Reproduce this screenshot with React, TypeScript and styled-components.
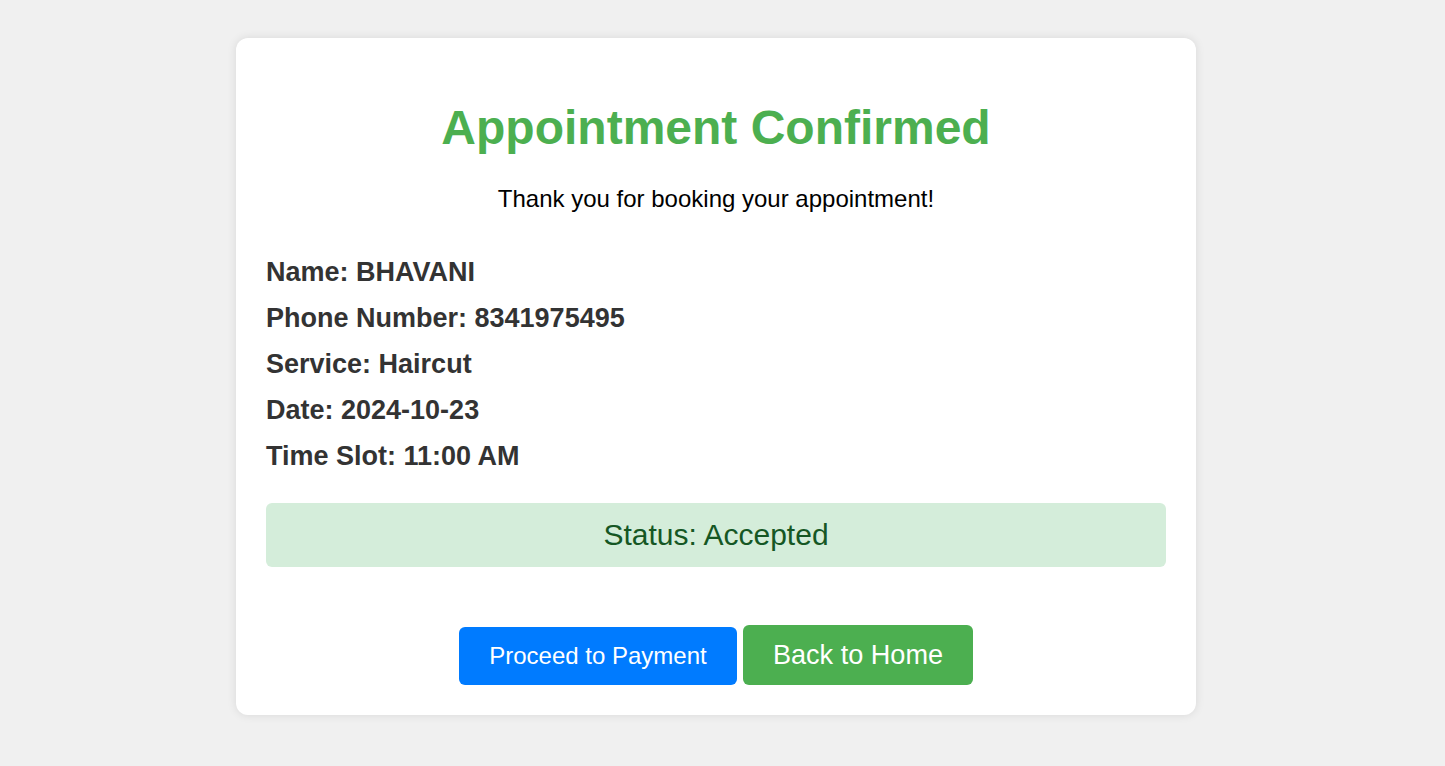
import React from "react";
import styled, { createGlobalStyle } from "styled-components";

const GlobalStyle = createGlobalStyle`
  html, body {
    margin: 0;
    padding: 0;
    background: #f0f0f0;
    font-family: "Liberation Sans", Arial, sans-serif;
  }
`;

const Page = styled.div`
  display: flex;
  justify-content: center;
  padding: 38px 13px 0 0;
  min-height: 766px;
  box-sizing: border-box;
`;

const Card = styled.div`
  width: 960px;
  box-sizing: border-box;
  background: #ffffff;
  border-radius: 12px;
  box-shadow: 0 0 10px rgba(0, 0, 0, 0.1);
  padding: 30px;
  display: flex;
  flex-direction: column;
  align-self: flex-start;
`;

const Title = styled.h1`
  margin: 32px 0 0;
  font-size: 48px;
  line-height: 55px;
  font-weight: bold;
  color: #4caf50;
  text-align: center;
`;

const Subtitle = styled.p`
  margin: 30px 0 0;
  font-size: 24px;
  line-height: 28px;
  color: #000000;
  text-align: center;
`;

const Details = styled.div`
  margin-top: 36px;
  display: flex;
  flex-direction: column;
`;

const Row = styled.div`
  font-size: 27px;
  line-height: 46px;
  font-weight: bold;
  color: #333333;
`;

const Status = styled.div`
  margin-top: 24px;
  height: 64px;
  line-height: 64px;
  border-radius: 6px;
  background: #d4edda;
  color: #155724;
  font-size: 30px;
  text-align: center;
`;

const Actions = styled.div`
  margin-top: 58px;
  display: flex;
  justify-content: center;
  align-items: flex-end;
  gap: 6px;
`;

const Button = styled.button<{ $bg: string; $size: number; $h: number; $w: number }>`
  border: none;
  border-radius: 6px;
  background: ${(p) => p.$bg};
  color: #ffffff;
  font-family: "Liberation Sans", Arial, sans-serif;
  font-size: ${(p) => p.$size}px;
  height: ${(p) => p.$h}px;
  width: ${(p) => p.$w}px;
  padding: 0;
  cursor: pointer;
`;

const details = [
  ["Name", "BHAVANI"],
  ["Phone Number", "8341975495"],
  ["Service", "Haircut"],
  ["Date", "2024-10-23"],
  ["Time Slot", "11:00 AM"],
];

export default function App() {
  return (
    <>
      <GlobalStyle />
      <Page>
        <Card>
          <Title>Appointment Confirmed</Title>
          <Subtitle>Thank you for booking your appointment!</Subtitle>
          <Details>
            {details.map(([k, v]) => (
              <Row key={k}>
                {k}: {v}
              </Row>
            ))}
          </Details>
          <Status>Status: Accepted</Status>
          <Actions>
            <Button $bg="#007bff" $size={24} $h={58} $w={278}>
              Proceed to Payment
            </Button>
            <Button $bg="#4caf50" $size={27.1} $h={60} $w={230}>
              Back to Home
            </Button>
          </Actions>
        </Card>
      </Page>
    </>
  );
}
